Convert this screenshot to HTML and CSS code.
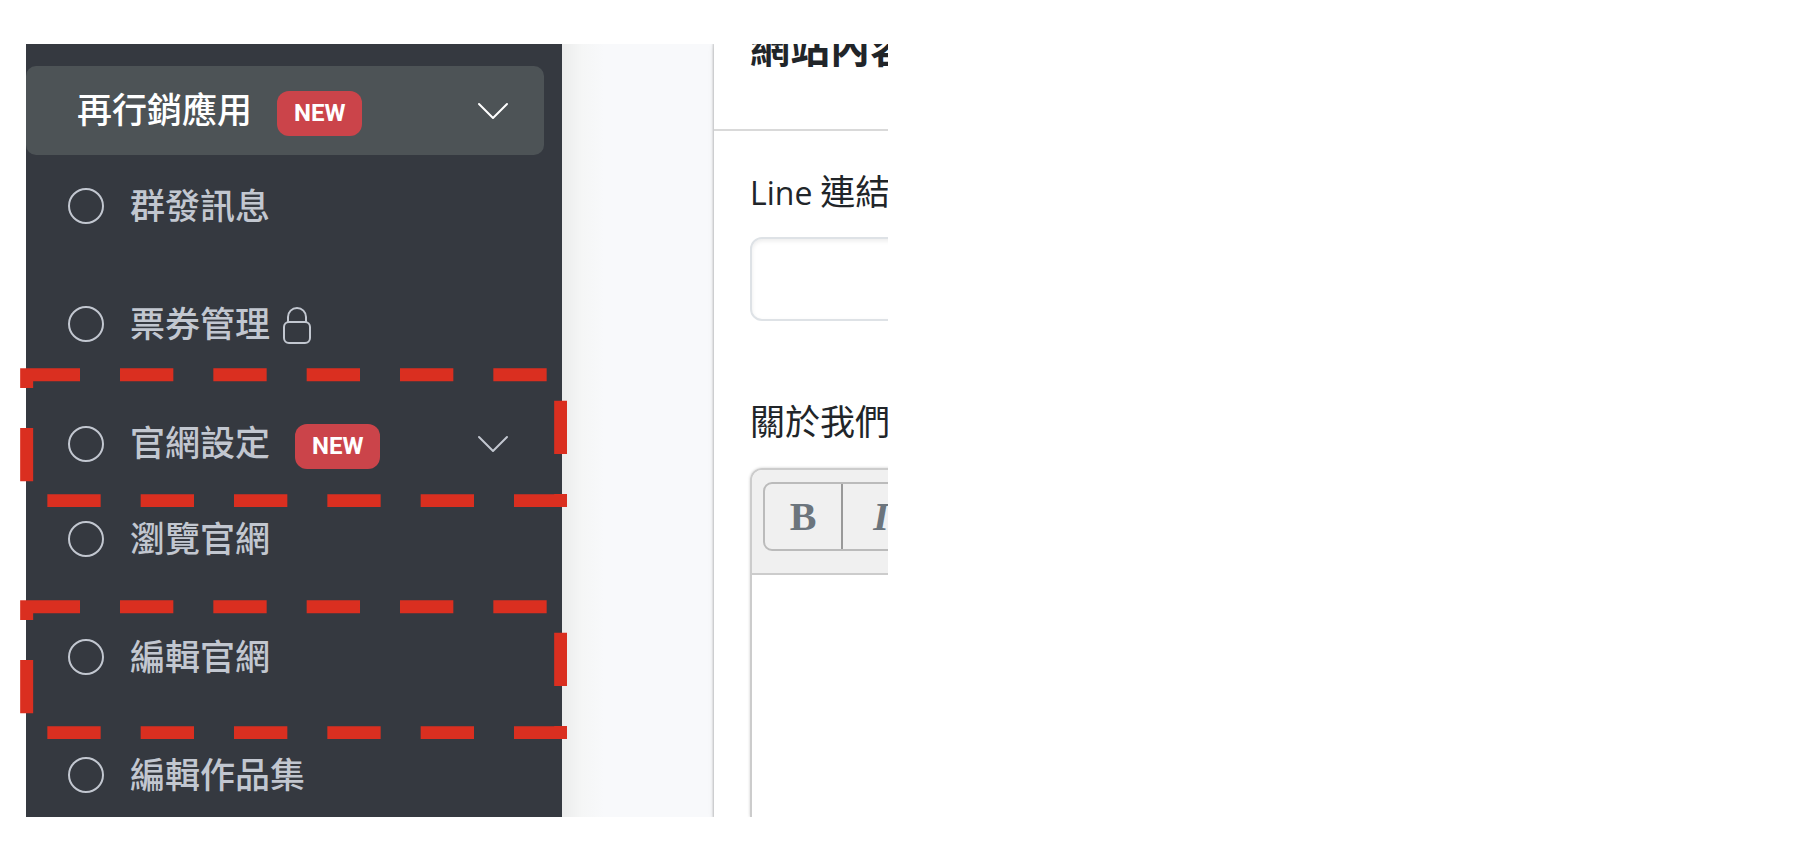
FILE: index.html
```html
<!DOCTYPE html>
<html lang="zh-Hant">
<head>
  <meta charset="UTF-8">
  <meta name="viewport" content="width=device-width, initial-scale=1.0">
  <title>官網設定</title>
  <link rel="stylesheet" href="styles.css">
</head>
<body>
  <div class="frame">
    <nav class="sidebar">
      <ul class="menu">
        <li>
          <a href="#" class="parent active">
            <span class="text">再行銷應用</span>
            <span class="badge">NEW</span>
            <svg class="arrow" viewBox="0 0 32 18"><path d="M2 2 L16 16 L30 2"/></svg>
          </a>
          <ul class="submenu">
            <li><a href="#" class="child"><i class="circle"></i><span class="text">群發訊息</span></a></li>
            <li>
              <a href="#" class="child"><i class="circle"></i><span class="text">票券管理</span>
                <svg class="lock" viewBox="0 0 28 38"><path d="M5 15 V10 a9 9 0 0 1 18 0 V15"/><rect x="1" y="15" width="26" height="21" rx="5"/></svg>
              </a>
            </li>
          </ul>
        </li>
        <li>
          <a href="#" class="parent setting">
            <i class="circle"></i>
            <span class="text">官網設定</span>
            <span class="badge">NEW</span>
            <svg class="arrow" viewBox="0 0 32 18"><path d="M2 2 L16 16 L30 2"/></svg>
            <svg class="mark" viewBox="0 0 1641 417"><rect x="20" y="20" width="1602" height="378" stroke-dasharray="160 120"/></svg>
          </a>
          <ul class="submenu">
            <li><a href="#" class="child"><i class="circle"></i><span class="text">瀏覽官網</span></a></li>
            <li>
              <a href="#" class="child"><i class="circle"></i><span class="text">編輯官網</span>
                <svg class="mark" viewBox="0 0 1641 417"><rect x="20" y="20" width="1602" height="378" stroke-dasharray="160 120"/></svg>
              </a>
            </li>
            <li><a href="#" class="child"><i class="circle"></i><span class="text">編輯作品集</span></a></li>
          </ul>
        </li>
      </ul>
    </nav>

    <main class="content">
      <div class="card">
        <h1 class="card-header">網站內容</h1>
        <form class="card-body">
          <label for="line"><span class="latin">Line</span> 連結</label>
          <input type="text" id="line" name="line" class="field">
          <label for="about">關於我們</label>
          <div class="editor">
            <div class="toolbar">
              <div class="btn-group">
                <button type="button" class="bold">B</button>
                <button type="button" class="italic">I</button>
              </div>
            </div>
            <textarea id="about" name="about"></textarea>
          </div>
        </form>
      </div>
    </main>
  </div>
</body>
</html>
```
FILE: styles.css
```css
* {
  box-sizing: border-box;
}

body {
  margin: 0;
  background-color: #fff;
  font-family: "Noto Sans CJK TC", sans-serif;
  font-size: 35px;
  line-height: 52px;
  color: #212529;
}

.frame {
  display: flex;
  width: calc(50vw - 41px);
  height: calc(100vh - 77px);
  margin: 44px 0 0 26px;
  overflow-y: clip;
}

/* sidebar */
.sidebar {
  flex: 0 0 536px;
  padding-top: 22px;
  background-color: #353940;
  position: relative;
  z-index: 1;
}

.menu,
.submenu {
  display: flex;
  flex-direction: column;
  list-style: none;
  margin: 0;
  padding: 0;
}

.menu {
  gap: 24px;
}

.submenu {
  gap: 16px;
}

.sidebar a {
  display: flex;
  align-items: center;
  position: relative;
  color: #c2c7d0;
  font-weight: 500;
  text-decoration: none;
  white-space: nowrap;
}

.text {
  padding-bottom: 5px;
}

.parent {
  height: 89px;
  padding-right: 35px;
  margin-right: 18px;
  border-radius: 10px;
}

.sidebar .active {
  padding-left: 51px;
  background-color: #4d5356;
  color: #fff;
}

.setting,
.child {
  padding-left: 42px;
}

.child {
  height: 102px;
}

.circle {
  width: 36px;
  height: 36px;
  margin-right: 26px;
  border: 2px solid #c2c7d0;
  border-radius: 50%;
}

.badge {
  margin: 6px 0 0 25px;
  padding: 0 17px 1px;
  border-radius: 12px;
  background-color: #cb444a;
  color: #fff;
  font-family: Roboto, sans-serif;
  font-size: 24px;
  font-weight: 700;
  line-height: 44px;
}

.arrow {
  width: 32px;
  height: 18px;
  margin-left: auto;
  fill: none;
  stroke: currentColor;
  stroke-width: 2;
  stroke-linecap: round;
  stroke-linejoin: round;
}

.lock {
  width: 28px;
  height: 38px;
  margin: 4px 0 0 13px;
  fill: none;
  stroke: #c2c7d0;
  stroke-width: 2;
}

/* red dashed frame over a menu item */
.mark {
  position: absolute;
  left: -6px;
  top: 50%;
  width: 547px;
  height: 139px;
  margin-top: -76px;
  fill: none;
  stroke: #da2f20;
  stroke-width: 39;
  pointer-events: none;
}

.child .mark {
  margin-top: -57px;
}

/* content */
.content {
  flex: 1;
  min-width: 0;
  padding-left: 152px;
  background: linear-gradient(to right, #ebecec, #f5f6f6 20px, #f8f9fb 42px);
  overflow: hidden;
}

.card {
  height: 100%;
  background-color: #fff;
  box-shadow: 0 0 2px 1px rgba(0, 0, 0, 0.2), 0 2px 6px rgba(0, 0, 0, 0.1);
  white-space: nowrap;
  overflow: hidden;
}

.card-header {
  height: 87px;
  margin: 0;
  border-bottom: 2px solid #d9d9d9;
  font-size: 40px;
  font-weight: 700;
  line-height: 4px;
  padding-left: 36px;
}

.card-body {
  display: flex;
  flex-direction: column;
  height: calc(100% - 87px);
  padding: 33px 0 0 36px;
}

.card-body label {
  display: block;
}

.latin {
  font-family: "Open Sans", sans-serif;
  font-size: 32px;
  line-height: 1;
}

.field {
  width: 400px;
  height: 84px;
  margin: 21px 0 73px;
  border: 2px solid #dee2e6;
  border-radius: 12px;
  box-shadow: inset 0 2px 4px rgba(0, 0, 0, 0.08);
  font: inherit;
}

.editor {
  flex: 1;
  display: flex;
  flex-direction: column;
  width: 400px;
  margin-top: 22px;
  border: 2px solid #ccc;
  border-bottom: 0;
  border-radius: 12px 12px 0 0;
  box-shadow: 0 0 3px rgba(0, 0, 0, 0.2);
  overflow: hidden;
}

.toolbar {
  padding: 12px 11px 22px;
  background-color: #f0f0f0;
  border-bottom: 2px solid #ccc;
}

.btn-group {
  display: flex;
  height: 69px;
  border: 2px solid #bbb;
  border-radius: 9px;
}

.btn-group button {
  width: 78px;
  padding: 0;
  border: 0;
  border-right: 2px solid #999;
  background: none;
  color: #6c757d;
  font-family: "Liberation Serif", serif;
  font-size: 40px;
  font-weight: 700;
}

.btn-group .italic {
  font-style: italic;
}

.editor textarea {
  flex: 1;
  border: 0;
  resize: none;
  outline: none;
  font: inherit;
}
```
